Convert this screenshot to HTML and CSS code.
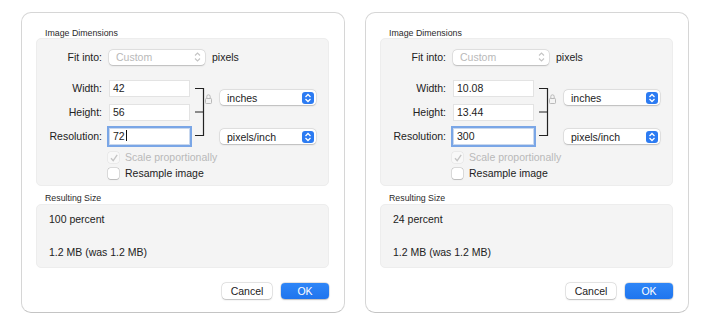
FILE: index.html
```html
<!DOCTYPE html>
<html lang="en">
<head>
    <meta charset="UTF-8">
    <title>Adjust Size</title>
    <link rel="stylesheet" href="styles.css">
</head>
<body>
    <div class="sheet">
        <div class="group-title">Image Dimensions</div>
        <div class="group">
            <div class="fit-row">
                <span class="label">Fit into:</span>
                <div class="popup disabled">
                    <span>Custom</span>
                    <svg class="chev" width="7" height="10" viewBox="0 0 7 10"><path d="M1 3.5 L3.5 1 L6 3.5 M1 6.5 L3.5 9 L6 6.5" fill="none" stroke="#c4c4c4" stroke-width="1.1"/></svg>
                </div>
                <span class="unit">pixels</span>
            </div>
            <div class="dims">
                <div class="fields">
                    <span class="label">Width:</span><div class="field">42</div>
                    <span class="label">Height:</span><div class="field">56</div>
                    <span class="label">Resolution:</span><div class="field focus">72<i class="caret"></i></div>
                </div>
                <svg class="bracket" width="28" height="64" viewBox="0 0 28 64">
                    <path d="M6 7.5 H14.5 V54.5 H6 M6 31 H14.5" fill="none" stroke="#222" stroke-width="1.2"/>
                    <rect x="16.5" y="17.5" width="6" height="5" rx="0.8" fill="none" stroke="#b9b9b9"/>
                    <path d="M17.8 17.5 V15.5 a1.7 1.7 0 0 1 3.4 0 V17.5" fill="none" stroke="#b9b9b9"/>
                </svg>
                <div class="units">
                    <div class="popup">
                        <span>inches</span>
                        <span class="stepper"><svg width="8" height="10" viewBox="0 0 8 10"><path d="M1.5 4 L4 1.5 L6.5 4 M1.5 6 L4 8.5 L6.5 6" fill="none" stroke="#fff" stroke-width="1.3"/></svg></span>
                    </div>
                    <div class="popup">
                        <span>pixels/inch</span>
                        <span class="stepper"><svg width="8" height="10" viewBox="0 0 8 10"><path d="M1.5 4 L4 1.5 L6.5 4 M1.5 6 L4 8.5 L6.5 6" fill="none" stroke="#fff" stroke-width="1.3"/></svg></span>
                    </div>
                </div>
            </div>
            <div class="check disabled">
                <span class="box"><svg width="10" height="10" viewBox="0 0 10 10"><path d="M2 5.2 L4.2 7.6 L8.2 1.8" fill="none" stroke="#c4c4c4" stroke-width="1.3"/></svg></span>
                Scale proportionally
            </div>
            <div class="check">
                <span class="box"></span>
                Resample image
            </div>
        </div>
        <div class="group-title second">Resulting Size</div>
        <div class="result">
            <div>100 percent</div>
            <div>1.2 MB (was 1.2 MB)</div>
        </div>
        <div class="buttons">
            <button class="btn">Cancel</button>
            <button class="btn primary">OK</button>
        </div>
    </div>

    <div class="sheet">
        <div class="group-title">Image Dimensions</div>
        <div class="group">
            <div class="fit-row">
                <span class="label">Fit into:</span>
                <div class="popup disabled">
                    <span>Custom</span>
                    <svg class="chev" width="7" height="10" viewBox="0 0 7 10"><path d="M1 3.5 L3.5 1 L6 3.5 M1 6.5 L3.5 9 L6 6.5" fill="none" stroke="#c4c4c4" stroke-width="1.1"/></svg>
                </div>
                <span class="unit">pixels</span>
            </div>
            <div class="dims">
                <div class="fields">
                    <span class="label">Width:</span><div class="field">10.08</div>
                    <span class="label">Height:</span><div class="field">13.44</div>
                    <span class="label">Resolution:</span><div class="field focus">300</div>
                </div>
                <svg class="bracket" width="28" height="64" viewBox="0 0 28 64">
                    <path d="M6 7.5 H14.5 V54.5 H6 M6 31 H14.5" fill="none" stroke="#222" stroke-width="1.2"/>
                    <rect x="16.5" y="17.5" width="6" height="5" rx="0.8" fill="none" stroke="#b9b9b9"/>
                    <path d="M17.8 17.5 V15.5 a1.7 1.7 0 0 1 3.4 0 V17.5" fill="none" stroke="#b9b9b9"/>
                </svg>
                <div class="units">
                    <div class="popup">
                        <span>inches</span>
                        <span class="stepper"><svg width="8" height="10" viewBox="0 0 8 10"><path d="M1.5 4 L4 1.5 L6.5 4 M1.5 6 L4 8.5 L6.5 6" fill="none" stroke="#fff" stroke-width="1.3"/></svg></span>
                    </div>
                    <div class="popup">
                        <span>pixels/inch</span>
                        <span class="stepper"><svg width="8" height="10" viewBox="0 0 8 10"><path d="M1.5 4 L4 1.5 L6.5 4 M1.5 6 L4 8.5 L6.5 6" fill="none" stroke="#fff" stroke-width="1.3"/></svg></span>
                    </div>
                </div>
            </div>
            <div class="check disabled">
                <span class="box"><svg width="10" height="10" viewBox="0 0 10 10"><path d="M2 5.2 L4.2 7.6 L8.2 1.8" fill="none" stroke="#c4c4c4" stroke-width="1.3"/></svg></span>
                Scale proportionally
            </div>
            <div class="check">
                <span class="box"></span>
                Resample image
            </div>
        </div>
        <div class="group-title second">Resulting Size</div>
        <div class="result">
            <div>24 percent</div>
            <div>1.2 MB (was 1.2 MB)</div>
        </div>
        <div class="buttons">
            <button class="btn">Cancel</button>
            <button class="btn primary">OK</button>
        </div>
    </div>
</body>
</html>
```

FILE: styles.css
```css
* {
    margin: 0;
    padding: 0;
    box-sizing: border-box;
}

body {
    font-family: "Liberation Sans", Arial, sans-serif;
    font-size: 10.5px;
    color: #222;
    background: #fff;
    display: flex;
    gap: 20px;
    padding: 12px 0 0 21px;
}

.sheet {
    width: 324px;
    height: 301px;
    border: 1px solid #d6d6d6;
    border-bottom-color: #c4c4c4;
    border-radius: 10px;
    padding: 0 15px 0 14px;
}

.group-title {
    font-size: 8.8px;
    color: #2a2a2a;
    height: 25px;
    padding: 15px 0 0 9px;
    line-height: 10px;
}

.group-title.second {
    height: 18px;
    padding-top: 7px;
}

.group {
    background: #f4f4f4;
    border: 1px solid #ededed;
    border-radius: 5px;
    height: 148px;
    padding-top: 10px;
}

.label {
    width: 65px;
    text-align: right;
    line-height: 15px;
}

.fit-row {
    display: flex;
    align-items: center;
    gap: 7px;
}

.fit-row .popup {
    width: 96px;
}

.unit {
    line-height: 16px;
}

.popup {
    height: 15px;
    background: #fff;
    border-radius: 4px;
    box-shadow: 0 0 0 0.5px rgba(0, 0, 0, 0.12), 0 0.5px 1.5px rgba(0, 0, 0, 0.18);
    display: flex;
    align-items: center;
    justify-content: space-between;
    padding: 0 2px 0 7px;
}

.popup.disabled {
    color: #b9b9b9;
    padding-right: 4px;
}

.stepper {
    width: 12px;
    height: 12px;
    background: #2c7bf2;
    border-radius: 3px;
    display: flex;
    align-items: center;
    justify-content: center;
}

.dims {
    display: flex;
    margin-top: 16px;
}

.fields {
    display: grid;
    grid-template-columns: 65px 79px;
    column-gap: 8px;
    row-gap: 8.5px;
}

.field {
    height: 15px;
    background: #fff;
    box-shadow: 0 0 0 1px #e3e3e3;
    line-height: 15px;
    padding-left: 3px;
}

.field.focus {
    box-shadow: 0 0 0 1px #c9d8ee, 0 0 0 3px #7aa6e6;
}

.caret {
    display: inline-block;
    width: 1px;
    height: 11px;
    background: #111;
    vertical-align: -1px;
    margin-left: 1px;
}

.bracket {
    flex: none;
}

.units {
    display: flex;
    flex-direction: column;
    gap: 24px;
    padding-top: 9px;
    margin-left: 3px;
}

.units .popup {
    width: 96px;
}

.check {
    display: flex;
    align-items: center;
    gap: 6px;
    margin-left: 71px;
    height: 17px;
    line-height: 17px;
}

.dims + .check {
    margin-top: 4px;
}

.check + .check {
    margin-top: -1px;
}

.check.disabled {
    color: #b9b9b9;
}

.box {
    width: 11px;
    height: 11px;
    background: #fff;
    border-radius: 2.5px;
    box-shadow: 0 0 0 0.5px rgba(0, 0, 0, 0.2), 0 0.5px 1px rgba(0, 0, 0, 0.15);
    display: flex;
    align-items: center;
    justify-content: center;
}

.check.disabled .box {
    background: #f8f8f8;
    box-shadow: 0 0 0 0.5px rgba(0, 0, 0, 0.08);
}

.result {
    background: #f4f4f4;
    border: 1px solid #ededed;
    border-radius: 5px;
    height: 64px;
    padding: 8px 0 0 12px;
    display: flex;
    flex-direction: column;
    gap: 20px;
    line-height: 13px;
}

.buttons {
    display: flex;
    justify-content: flex-end;
    gap: 9px;
    margin-top: 15px;
}

.btn {
    font-family: inherit;
    font-size: 10.5px;
    height: 16px;
    width: 50px;
    border: none;
    border-radius: 4px;
    background: #fff;
    color: #222;
    box-shadow: 0 0 0 0.5px rgba(0, 0, 0, 0.15), 0 0.5px 1.5px rgba(0, 0, 0, 0.2);
}

.btn.primary {
    width: 48px;
    background: linear-gradient(#2f86f7, #1f75ee);
    color: #fff;
}
```
